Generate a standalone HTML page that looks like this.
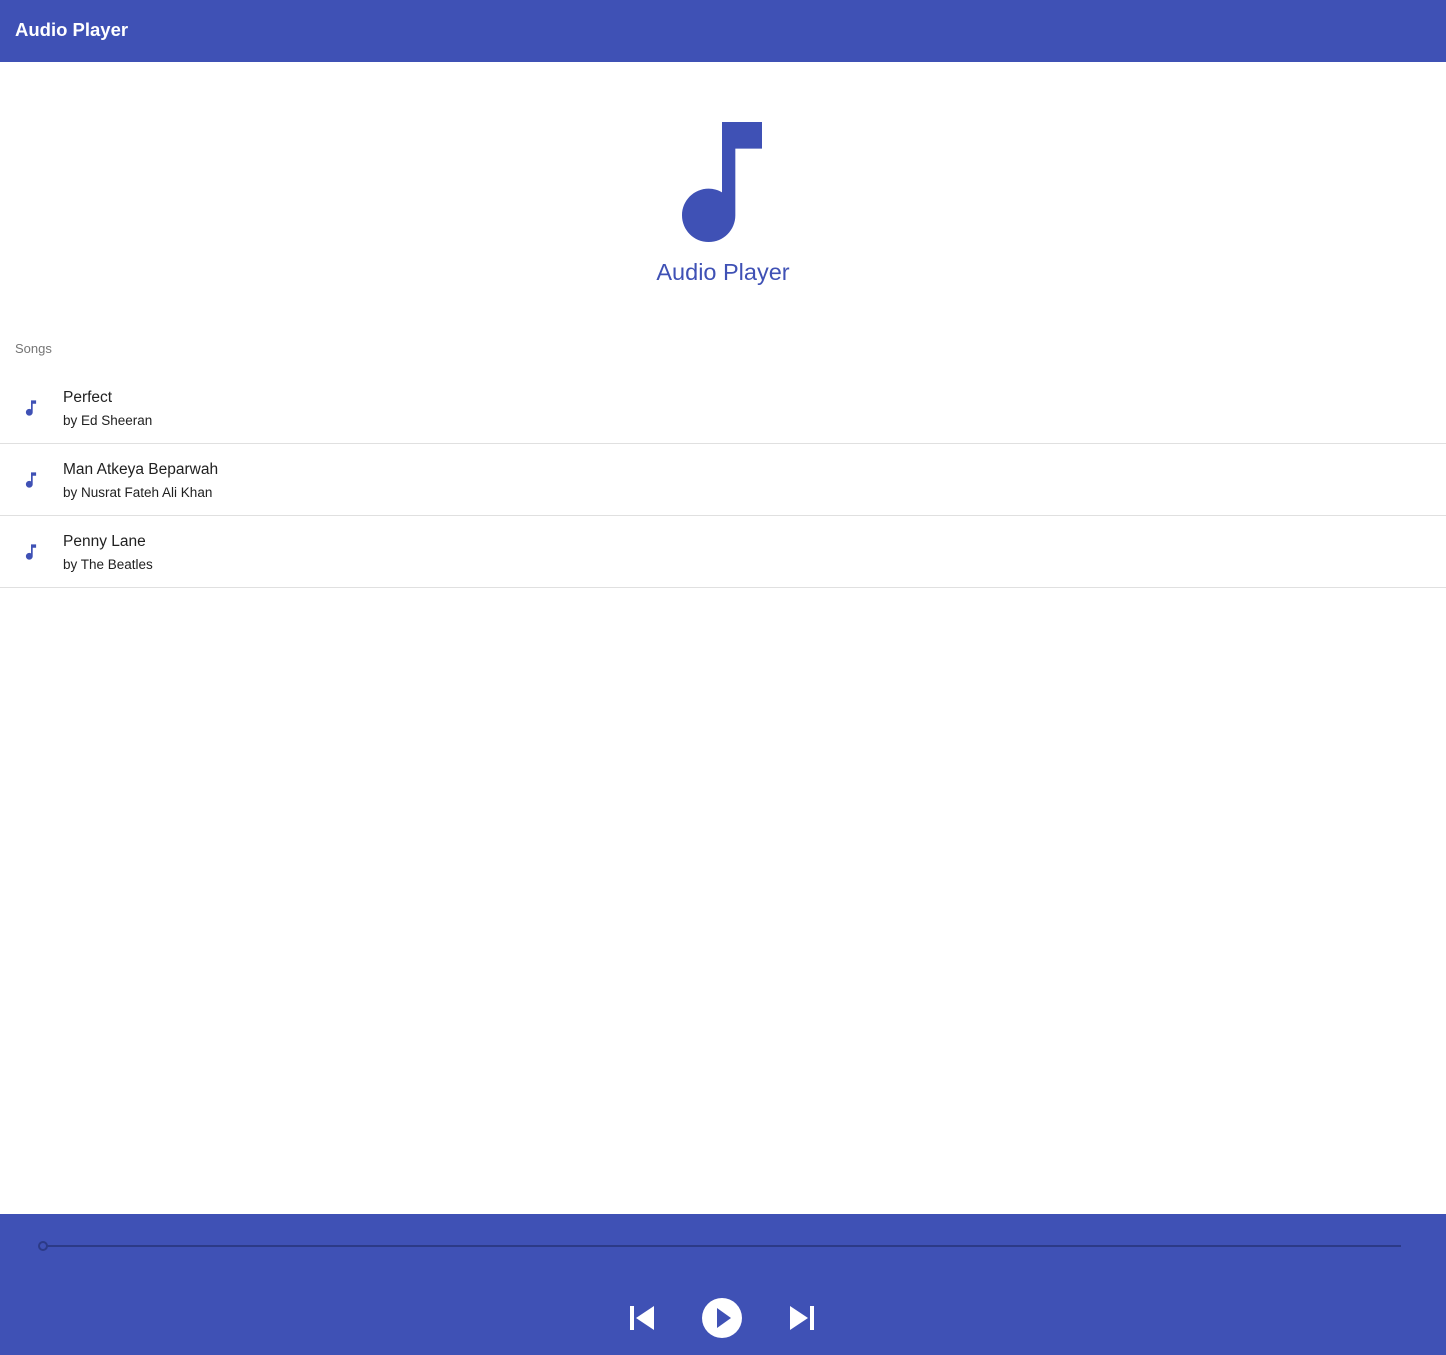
<!DOCTYPE html>
<html><head><style>
body{margin:0;width:1446px;height:1355px;position:relative;font-family:"Liberation Sans",Roboto,sans-serif;background:#fff;overflow:hidden}
.bar{position:absolute;left:0;top:0;width:1446px;height:62px;background:#3f51b5;color:#fff;font-size:18.5px;font-weight:bold;line-height:60px;padding-left:15px;box-sizing:border-box}
.title{position:absolute;top:259px;left:0;width:1446px;text-align:center;color:#3f51b5;font-size:23.5px}
.sub{position:absolute;left:15px;top:341px;font-size:13px;color:#757575}
.item{position:absolute;left:0;width:1446px;height:71px;border-bottom:1px solid #e0e0e0}
.item svg{position:absolute;left:19px;top:24px}
.t1{position:absolute;left:63px;top:17px;font-size:15.5px;color:#212121}
.t2{position:absolute;left:63px;top:41px;font-size:13.5px;color:#212121}
.foot{position:absolute;left:0;top:1214px;width:1446px;height:141px;background:#3f51b5}
</style></head><body>
<div class="bar">Audio Player</div>
<svg style="position:absolute;left:642px;top:102px" width="160" height="160" viewBox="0 0 24 24"><path fill="#3f51b5" d="M12 3v10.55c-.59-.34-1.27-.55-2-.55-2.21 0-4 1.79-4 4s1.79 4 4 4 4-1.79 4-4V7h4V3h-6z"/></svg>
<div class="title">Audio Player</div>
<div class="sub">Songs</div>
<div class="item" style="top:372px"><svg width="24" height="24" viewBox="0 0 24 24"><path fill="#3f51b5" d="M12 3v10.55c-.59-.34-1.27-.55-2-.55-2.21 0-4 1.79-4 4s1.79 4 4 4 4-1.79 4-4V7h4V3h-6z" transform="translate(12 12) scale(.85) translate(-12 -12)"/></svg><div class="t1">Perfect</div><div class="t2">by Ed Sheeran</div></div>
<div class="item" style="top:444px"><svg width="24" height="24" viewBox="0 0 24 24"><path fill="#3f51b5" d="M12 3v10.55c-.59-.34-1.27-.55-2-.55-2.21 0-4 1.79-4 4s1.79 4 4 4 4-1.79 4-4V7h4V3h-6z" transform="translate(12 12) scale(.85) translate(-12 -12)"/></svg><div class="t1">Man Atkeya Beparwah</div><div class="t2">by Nusrat Fateh Ali Khan</div></div>
<div class="item" style="top:516px"><svg width="24" height="24" viewBox="0 0 24 24"><path fill="#3f51b5" d="M12 3v10.55c-.59-.34-1.27-.55-2-.55-2.21 0-4 1.79-4 4s1.79 4 4 4 4-1.79 4-4V7h4V3h-6z" transform="translate(12 12) scale(.85) translate(-12 -12)"/></svg><div class="t1">Penny Lane</div><div class="t2">by The Beatles</div></div>
<div class="foot">
<svg width="1446" height="141" style="position:absolute;left:0;top:0">
<line x1="47" y1="32" x2="1401" y2="32" stroke="#2c3a87" stroke-width="2"/>
<circle cx="43" cy="32" r="4" fill="none" stroke="#2c3a87" stroke-width="2"/>
<rect x="630" y="92" width="4" height="24" fill="#fff"/>
<path d="M654 92 L636 104 L654 116Z" fill="#fff"/>
<circle cx="722" cy="104" r="20" fill="#fff"/>
<path d="M717 94 L731 104 L717 114Z" fill="#3f51b5"/>
<rect x="810" y="92" width="4" height="24" fill="#fff"/>
<path d="M790 92 L808 104 L790 116Z" fill="#fff"/>
</svg>
</div>
</body></html>
